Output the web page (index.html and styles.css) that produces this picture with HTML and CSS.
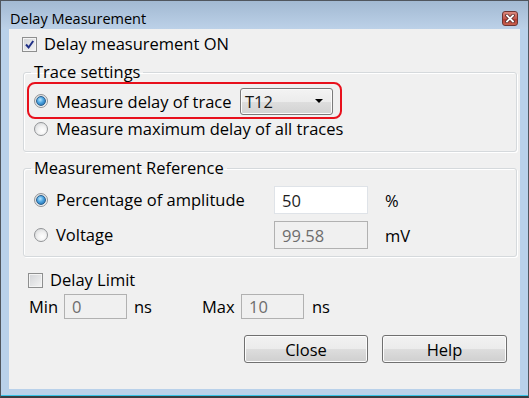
FILE: index.html
```html
<!DOCTYPE html>
<html lang="en">
<head>
  <meta charset="UTF-8" />
  <title>Delay Measurement</title>
  <link rel="stylesheet" href="styles.css">
</head>
<body>
  <div class="window">
    <div class="titlebar">
      <span class="title">Delay Measurement</span>
      <span class="close-btn">
        <svg width="10" height="9" viewBox="0 0 10 9">
          <path d="M2 1.5 L8 7.5 M8 1.5 L2 7.5" stroke="#5a2a28" stroke-width="3.4" stroke-linecap="square"/>
          <path d="M2 1.5 L8 7.5 M8 1.5 L2 7.5" stroke="#ffffff" stroke-width="1.8" stroke-linecap="square"/>
        </svg>
      </span>
    </div>

    <div class="client">
      <div class="check-row main-check">
        <span class="checkbox">
          <svg width="13" height="13" viewBox="0 0 13 13">
            <path d="M3 6.5 L5.6 9.5 L10.2 3" fill="none" stroke="#1f2f86" stroke-width="2"/>
          </svg>
        </span>
        <span>Delay measurement ON</span>
      </div>

      <fieldset class="group trace-group">
        <legend>Trace settings</legend>
        <div class="highlight">
          <span class="radio on"></span>
          <span class="opt-text">Measure delay of trace</span>
          <div class="combo">
            <span>T12</span>
            <span class="arrow"></span>
          </div>
        </div>
        <div class="opt-row">
          <span class="radio"></span>
          <span class="opt-text">Measure maximum delay of all traces</span>
        </div>
      </fieldset>

      <fieldset class="group ref-group">
        <legend>Measurement Reference</legend>
        <div class="ref-grid">
          <div class="opt-row">
            <span class="radio on"></span>
            <span class="opt-text">Percentage of amplitude</span>
          </div>
          <div class="field">50</div>
          <span class="unit">%</span>

          <div class="opt-row">
            <span class="radio"></span>
            <span class="opt-text">Voltage</span>
          </div>
          <div class="field disabled">99.58</div>
          <span class="unit">mV</span>
        </div>
      </fieldset>

      <div class="check-row limit-check">
        <span class="checkbox"></span>
        <span>Delay Limit</span>
      </div>

      <div class="limit-row">
        <span class="lbl-min">Min</span>
        <div class="field disabled small">0</div>
        <span class="unit-ns">ns</span>
        <span class="lbl-max">Max</span>
        <div class="field disabled small">10</div>
        <span class="unit-end">ns</span>
      </div>

      <div class="buttons">
        <button class="btn btn-close">Close</button>
        <button class="btn btn-help">Help</button>
      </div>
    </div>
  </div>
</body>
</html>
```

FILE: styles.css
```css
* {
  box-sizing: border-box;
}

html, body {
  margin: 0;
  padding: 0;
  background: #ffffff;
  font-family: "Open Sans", "Noto Sans", sans-serif;
  font-size: 16.5px;
  color: #000;
}

.window {
  width: 529px;
  height: 398px;
  display: flex;
  flex-direction: column;
  border: 1px solid #50565e;
  border-bottom: 2px solid #3a3d42;
  background: #b9d1ea;
  box-shadow: inset 0 -1px 0 #36c3e6;
}

.titlebar {
  height: 28px;
  display: flex;
  align-items: center;
  padding: 7px 10px 0 9px;
  background: linear-gradient(#a2b9d2, #bcd1e8);
}

.title {
  font-size: 14.5px;
  line-height: 20px;
}

.close-btn {
  margin-left: auto;
  width: 16px;
  height: 15px;
  display: flex;
  justify-content: center;
  align-items: center;
  border: 1px solid #6e3431;
  border-radius: 3px;
  background: linear-gradient(#dc8a7e, #c4584c 50%, #b0392f 51%, #c8624f);
}

.client {
  flex: 1;
  margin: 0 8px 7px 8px;
  padding-top: 4px;
  background: #f0f0f0;
  display: flex;
  flex-direction: column;
}

/* checkboxes */
.check-row {
  height: 22px;
  display: flex;
  align-items: center;
  gap: 7px;
  line-height: 20px;
}

.main-check {
  padding-left: 13px;
}

.limit-check {
  margin-top: 12px;
  padding-left: 19px;
}

.checkbox {
  width: 15px;
  height: 15px;
  border: 1px solid #8e8f8f;
  background: linear-gradient(135deg, #d2d4d7, #f4f4f4);
  box-shadow: inset 0 0 0 1px #f4f4f4;
  display: flex;
  justify-content: center;
  align-items: center;
}

/* group boxes */
.group {
  margin: 0 3px 0 14px;
  padding: 0 0 0 3px;
  min-width: 0;
  border: 1px solid #d5d9dc;
  border-radius: 3px;
  box-shadow: inset 1px 1px 0 #ffffff, 1px 1px 0 #ffffff;
}

.group legend {
  margin-left: 4px;
  padding: 0 3px;
  line-height: 20px;
}

.trace-group {
  margin-top: 7px;
  padding-bottom: 12px;
}

.ref-group {
  margin-top: 6px;
  padding-bottom: 7px;
}

/* radios */
.radio {
  width: 14px;
  height: 14px;
  flex: none;
  border-radius: 50%;
  border: 1px solid #929497;
  background: radial-gradient(circle at 60% 65%, #ffffff 0, #f2f2f2 40%, #cfd1d3 100%);
  display: flex;
  justify-content: center;
  align-items: center;
}

.radio.on::after {
  content: "";
  width: 8px;
  height: 8px;
  border-radius: 50%;
  border: 1px solid #2a5f8e;
  background: radial-gradient(circle at 40% 35%, #b8e6ff 0, #4aa3e0 45%, #1d5f9c 100%);
}

.opt-row {
  height: 20px;
  display: flex;
  align-items: center;
  gap: 8px;
  padding-left: 7px;
  line-height: 20px;
}

.opt-text {
  white-space: nowrap;
}

.highlight {
  width: 315px;
  height: 37px;
  display: flex;
  align-items: center;
  gap: 8px;
  padding: 1px 7px 0 5px;
  border: 2px solid #e8101c;
  border-radius: 8px;
}

.combo {
  margin-left: auto;
  width: 93px;
  height: 27px;
  flex: none;
  display: flex;
  align-items: center;
  padding: 0 9px 0 4px;
  border: 1px solid #7a7a7a;
  border-radius: 3px;
  background: linear-gradient(#f3f3f3, #ececec 50%, #dedede 51%, #d2d2d2);
  box-shadow: inset 0 0 0 1px #fbfbfb;
  color: #1a1a1a;
}

.combo .arrow {
  margin-left: auto;
  width: 0;
  height: 0;
  border-left: 4px solid transparent;
  border-right: 4px solid transparent;
  border-top: 4px solid #000;
}

/* measurement reference */
.ref-grid {
  margin-top: 8px;
  display: grid;
  grid-template-columns: 247px 94px auto;
  grid-auto-rows: 28px;
  row-gap: 7px;
  align-items: center;
}

.ref-grid .unit {
  padding-left: 17px;
}

.field {
  height: 28px;
  display: flex;
  align-items: center;
  padding-left: 7px;
  background: #ffffff;
  border: 1px solid #dfe3e8;
  color: #1e1e1e;
}

.field.disabled {
  background: #f0f0f0;
  border-color: #b1b1b1;
  color: #6d6d6d;
}

.field.small {
  height: 25px;
}

/* delay limit */
.limit-row {
  margin-top: 3px;
  height: 25px;
  display: flex;
  align-items: center;
  padding-left: 20px;
}

.lbl-min {
  width: 35px;
}

.limit-row .field {
  width: 63px;
}

.unit-ns {
  width: 75px;
  padding-left: 7px;
}

.lbl-max {
  width: 39px;
}

.unit-end {
  padding-left: 8px;
}

/* buttons */
.buttons {
  margin-top: 16px;
  display: flex;
  justify-content: flex-end;
  gap: 14px;
  padding-right: 13px;
}

.btn {
  height: 28px;
  font-family: inherit;
  font-size: 16.5px;
  color: #000;
  border: 1px solid #707070;
  border-radius: 3px;
  background: linear-gradient(#f2f2f2, #ebebeb 50%, #dddddd 51%, #cfcfcf);
  box-shadow: inset 0 0 0 1px #fcfcfc;
  padding: 0;
}

.btn-close {
  width: 124px;
}

.btn-help {
  width: 125px;
}
```
